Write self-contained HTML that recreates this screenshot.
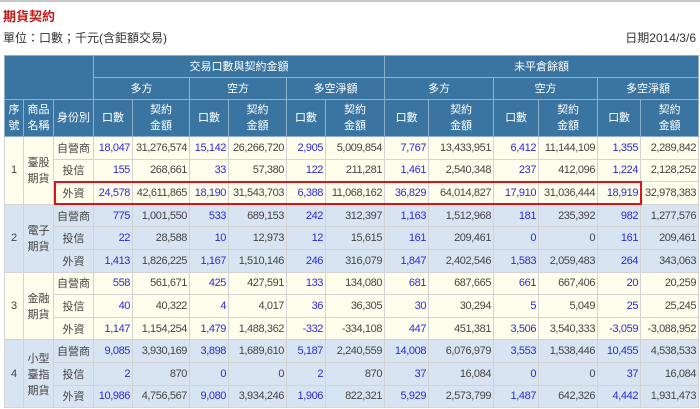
<!DOCTYPE html>
<html><head><meta charset="utf-8"><style>
body{margin:0;width:700px;height:409px;overflow:hidden;background:#fff;font-family:"Liberation Sans","Noto Sans CJK TC",sans-serif;font-size:12px;color:#333;position:relative}
.top{position:absolute;left:0;top:0;width:700px;height:2px;background:#c8c8c8}
h1{position:absolute;left:3px;top:6px;margin:0;font-size:13px;color:#c41a1a;font-weight:bold}
.unit{position:absolute;left:3px;top:29px;font-size:12px}
.date{position:absolute;right:4px;top:29px;font-size:12px}
table{position:absolute;left:4px;top:55px;width:694px;border-collapse:collapse;table-layout:fixed}
td,th{padding:0 2px;white-space:nowrap;overflow:hidden}
th{background:#3a75a2;color:#fff;font-weight:normal;border:1px solid #8fb0cc;text-align:center;line-height:16px;font-size:11px}
td{border:1px solid #d3d3d3;text-align:right;height:21.6px;font-size:11px;letter-spacing:-0.4px;color:#444}
td.c{text-align:center;letter-spacing:0}
.y td{background:#fffdeb}
.b td{background:#d9e4f2}
td.n{color:#2b2bd6}
.red{position:absolute;left:54px;top:181px;width:584px;height:20px;border:2px solid #d8141e}
</style></head><body>
<div class="top"></div>
<h1>期貨契約</h1>
<div class="unit">單位：口數；千元(含鉅額交易)</div>
<div class="date">日期2014/3/6</div>
<table>
<colgroup><col style="width:19px"><col style="width:30px"><col style="width:40px"><col style="width:39px"><col style="width:57px"><col style="width:39px"><col style="width:58px"><col style="width:39px"><col style="width:59px"><col style="width:44px"><col style="width:65px"><col style="width:45px"><col style="width:59px"><col style="width:43px"><col style="width:58px"></colgroup>
<tr style="height:22px"><th colspan="3" rowspan="2"></th><th colspan="6">交易口數與契約金額</th><th colspan="6">未平倉餘額</th></tr>
<tr style="height:22px"><th colspan="2">多方</th><th colspan="2">空方</th><th colspan="2">多空淨額</th><th colspan="2">多方</th><th colspan="2">空方</th><th colspan="2">多空淨額</th></tr>
<tr style="height:37px"><th>序<br>號</th><th>商品<br>名稱</th><th>身份別</th><th>口數</th><th>契約<br>金額</th><th>口數</th><th>契約<br>金額</th><th>口數</th><th>契約<br>金額</th><th>口數</th><th>契約<br>金額</th><th>口數</th><th>契約<br>金額</th><th>口數</th><th>契約<br>金額</th></tr>
<tr class="y"><td class="c" rowspan="3">1</td><td class="c" rowspan="3">臺股<br>期貨</td><td class="c">自營商</td><td class="n">18,047</td><td>31,276,574</td><td class="n">15,142</td><td>26,266,720</td><td class="n">2,905</td><td>5,009,854</td><td class="n">7,767</td><td>13,433,951</td><td class="n">6,412</td><td>11,144,109</td><td class="n">1,355</td><td>2,289,842</td></tr>
<tr class="y"><td class="c">投信</td><td class="n">155</td><td>268,661</td><td class="n">33</td><td>57,380</td><td class="n">122</td><td>211,281</td><td class="n">1,461</td><td>2,540,348</td><td class="n">237</td><td>412,096</td><td class="n">1,224</td><td>2,128,252</td></tr>
<tr class="y"><td class="c">外資</td><td class="n">24,578</td><td>42,611,865</td><td class="n">18,190</td><td>31,543,703</td><td class="n">6,388</td><td>11,068,162</td><td class="n">36,829</td><td>64,014,827</td><td class="n">17,910</td><td>31,036,444</td><td class="n">18,919</td><td>32,978,383</td></tr>
<tr class="b"><td class="c" rowspan="3">2</td><td class="c" rowspan="3">電子<br>期貨</td><td class="c">自營商</td><td class="n">775</td><td>1,001,550</td><td class="n">533</td><td>689,153</td><td class="n">242</td><td>312,397</td><td class="n">1,163</td><td>1,512,968</td><td class="n">181</td><td>235,392</td><td class="n">982</td><td>1,277,576</td></tr>
<tr class="b"><td class="c">投信</td><td class="n">22</td><td>28,588</td><td class="n">10</td><td>12,973</td><td class="n">12</td><td>15,615</td><td class="n">161</td><td>209,461</td><td class="n">0</td><td>0</td><td class="n">161</td><td>209,461</td></tr>
<tr class="b"><td class="c">外資</td><td class="n">1,413</td><td>1,826,225</td><td class="n">1,167</td><td>1,510,146</td><td class="n">246</td><td>316,079</td><td class="n">1,847</td><td>2,402,546</td><td class="n">1,583</td><td>2,059,483</td><td class="n">264</td><td>343,063</td></tr>
<tr class="y"><td class="c" rowspan="3">3</td><td class="c" rowspan="3">金融<br>期貨</td><td class="c">自營商</td><td class="n">558</td><td>561,671</td><td class="n">425</td><td>427,591</td><td class="n">133</td><td>134,080</td><td class="n">681</td><td>687,665</td><td class="n">661</td><td>667,406</td><td class="n">20</td><td>20,259</td></tr>
<tr class="y"><td class="c">投信</td><td class="n">40</td><td>40,322</td><td class="n">4</td><td>4,017</td><td class="n">36</td><td>36,305</td><td class="n">30</td><td>30,294</td><td class="n">5</td><td>5,049</td><td class="n">25</td><td>25,245</td></tr>
<tr class="y"><td class="c">外資</td><td class="n">1,147</td><td>1,154,254</td><td class="n">1,479</td><td>1,488,362</td><td class="n">-332</td><td>-334,108</td><td class="n">447</td><td>451,381</td><td class="n">3,506</td><td>3,540,333</td><td class="n">-3,059</td><td>-3,088,952</td></tr>
<tr class="b"><td class="c" rowspan="3">4</td><td class="c" rowspan="3">小型<br>臺指<br>期貨</td><td class="c">自營商</td><td class="n">9,085</td><td>3,930,169</td><td class="n">3,898</td><td>1,689,610</td><td class="n">5,187</td><td>2,240,559</td><td class="n">14,008</td><td>6,076,979</td><td class="n">3,553</td><td>1,538,446</td><td class="n">10,455</td><td>4,538,533</td></tr>
<tr class="b"><td class="c">投信</td><td class="n">2</td><td>870</td><td class="n">0</td><td>0</td><td class="n">2</td><td>870</td><td class="n">37</td><td>16,084</td><td class="n">0</td><td>0</td><td class="n">37</td><td>16,084</td></tr>
<tr class="b"><td class="c">外資</td><td class="n">10,986</td><td>4,756,567</td><td class="n">9,080</td><td>3,934,246</td><td class="n">1,906</td><td>822,321</td><td class="n">5,929</td><td>2,573,799</td><td class="n">1,487</td><td>642,326</td><td class="n">4,442</td><td>1,931,473</td></tr>
</table>
<div class="red"></div>
</body></html>
